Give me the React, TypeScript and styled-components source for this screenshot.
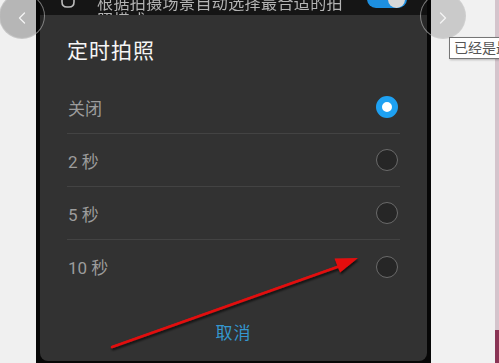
import styled, { createGlobalStyle } from 'styled-components';
import { ChevronLeft, ChevronRight } from 'lucide-react';

const options = [
  { label: '关闭', checked: true },
  { label: '2 秒', checked: false },
  { label: '5 秒', checked: false },
  { label: '10 秒', checked: false },
];

export default function App() {
  return (
    <>
      <GlobalStyle />
      <S.Page>
        <S.Gutter />
        <S.Phone>
          <S.BackdropBar>
            <S.BackdropRow>
              <S.SceneIcon viewBox="0 0 16 20" width={16} height={20}>
                <path
                  d="M2 2 V12 Q2 17 7 17 H9 Q14 17 14 12 V6 L11 9"
                  fill="none"
                  stroke="#bdbdbd"
                  strokeWidth={1.6}
                />
              </S.SceneIcon>
              <S.BackdropText>
                根据拍摄场景自动选择最合适的拍
                <br />
                照模式
              </S.BackdropText>
              <S.Toggle>
                <S.Thumb />
              </S.Toggle>
            </S.BackdropRow>
          </S.BackdropBar>

          <S.Dialog>
            <S.Title>定时拍照</S.Title>
            <S.OptionList>
              {options.map((option, index) => (
                <S.OptionRow key={option.label} last={index === options.length - 1}>
                  <S.OptionLabel>{option.label}</S.OptionLabel>
                  <S.Radio checked={option.checked} />
                </S.OptionRow>
              ))}
            </S.OptionList>
            <S.Footer>
              <S.CancelButton>取消</S.CancelButton>
            </S.Footer>
          </S.Dialog>
        </S.Phone>
        <S.RightArea />
        <S.EdgeStrip>
          <S.EdgeTop />
          <S.EdgeBottom />
        </S.EdgeStrip>

        <S.NavCircle side="left" tone="rgba(0, 0, 0, 0.24)">
          <ChevronLeft size={20} strokeWidth={1.6} color="#f4f4f4" />
        </S.NavCircle>
        <S.NavCircle side="right" tone="rgba(0, 0, 0, 0.16)">
          <ChevronRight size={20} strokeWidth={1.6} color="#f4f4f4" />
        </S.NavCircle>
        <S.Tooltip>已经是最后一张了</S.Tooltip>

        <S.Arrow viewBox="0 0 499 363" width={499} height={363}>
          <defs>
            <filter id="shade" x="-10%" y="-10%" width="120%" height="130%">
              <feDropShadow dx="1" dy="2" stdDeviation="1.2" floodColor="#000" floodOpacity="0.7" />
            </filter>
          </defs>
          <g filter="url(#shade)">
            <line x1={112} y1={347} x2={340} y2={266} stroke="#e31010" strokeWidth={2.6} strokeLinecap="round" />
            <polygon points="358,258 340,272.5 334.5,258.5" fill="#e31010" />
          </g>
        </S.Arrow>
      </S.Page>
    </>
  );
}

const GlobalStyle = createGlobalStyle`
  html, body {
    margin: 0;
    padding: 0;
    background: #f0f0f0;
    overflow: hidden;
  }
  #root {
    width: 499px;
    height: 363px;
  }
`;

const S = {
  Page: styled.div`
    position: relative;
    display: flex;
    width: 499px;
    height: 363px;
    overflow: hidden;
    background: #f0f0f0;
    font-family: Roboto, 'Noto Sans CJK SC', sans-serif;
  `,
  Gutter: styled.div`
    width: 36px;
    flex-shrink: 0;
    background: #f0f0f0;
  `,
  Phone: styled.div`
    width: 395px;
    flex-shrink: 0;
    box-sizing: border-box;
    padding: 0 4px;
    background: #070707;
    display: flex;
    flex-direction: column;
  `,
  BackdropBar: styled.div`
    height: 15px;
    overflow: hidden;
    background: #151515;
    flex-shrink: 0;
  `,
  BackdropRow: styled.div`
    display: flex;
    align-items: flex-start;
    margin-top: -10px;
    padding-left: 20px;
  `,
  SceneIcon: styled.svg`
    flex-shrink: 0;
    filter: blur(0.4px);
  `,
  BackdropText: styled.div`
    margin: 5px 0 0 21px;
    width: 250px;
    font-size: 16px;
    line-height: 17px;
    letter-spacing: 0.4px;
    color: #b4b4b4;
    white-space: nowrap;
    filter: blur(0.5px);
  `,
  Toggle: styled.div`
    margin-left: 20px;
    width: 40px;
    height: 18px;
    border-radius: 9px;
    background: #1d8fe0;
    display: flex;
    justify-content: flex-end;
    align-items: center;
    padding-right: 2px;
    box-sizing: border-box;
  `,
  Thumb: styled.div`
    width: 17px;
    height: 17px;
    border-radius: 50%;
    background: #d8d8d8;
  `,
  Dialog: styled.div`
    height: 346px;
    flex-shrink: 0;
    background: #323232;
    border-radius: 0 0 8px 8px;
    display: flex;
    flex-direction: column;
  `,
  Title: styled.div`
    padding: 22px 0 0 27px;
    height: 44px;
    line-height: 28px;
    font-size: 21px;
    color: #f6f6f6;
    letter-spacing: 1px;
  `,
  OptionList: styled.div`
    display: flex;
    flex-direction: column;
    margin: 0 27px;
  `,
  OptionRow: styled.div<{ last: boolean }>`
    height: 53px;
    box-sizing: border-box;
    display: flex;
    align-items: center;
    justify-content: space-between;
    padding: 0 2px 0 1px;
    border-bottom: ${({ last }) => (last ? 'none' : '1px solid #434343')};
  `,
  OptionLabel: styled.div`
    font-size: 17px;
    color: #9c9c9c;
  `,
  Radio: styled.div<{ checked: boolean }>`
    width: 22px;
    height: 22px;
    box-sizing: border-box;
    border-radius: 50%;
    background: ${({ checked }) => (checked ? '#ffffff' : '#262626')};
    border: ${({ checked }) => (checked ? '6px solid #1ea1f2' : '1.5px solid #6a6a6a')};
  `,
  Footer: styled.div`
    display: flex;
    justify-content: center;
    padding-top: 28px;
  `,
  CancelButton: styled.div`
    font-size: 17px;
    line-height: 24px;
    color: #3597cf;
    letter-spacing: 1px;
  `,
  RightArea: styled.div`
    flex: 1;
    background: #f1f1f1;
  `,
  EdgeStrip: styled.div`
    width: 4px;
    flex-shrink: 0;
    display: flex;
    flex-direction: column;
  `,
  EdgeTop: styled.div`
    flex: 1;
    background: #d4c4cc;
  `,
  EdgeBottom: styled.div`
    height: 33px;
    background: #8a3455;
  `,
  NavCircle: styled.div<{ side: 'left' | 'right'; tone: string }>`
    position: absolute;
    top: -7px;
    ${({ side }) => (side === 'left' ? 'left: -1px;' : 'left: 420px;')}
    width: 46px;
    height: 46px;
    box-sizing: border-box;
    border-radius: 50%;
    background: ${({ tone }) => tone};
    border: 1.5px solid rgba(210, 210, 210, 0.55);
    display: flex;
    align-items: center;
    justify-content: center;
    padding-top: 4px;
  `,
  Tooltip: styled.div`
    position: absolute;
    top: 37px;
    left: 449px;
    height: 22px;
    box-sizing: border-box;
    padding: 0 4px;
    border: 1px solid #767676;
    background: #ffffff;
    box-shadow: 1px 1px 2px rgba(0, 0, 0, 0.25);
    font-size: 14px;
    line-height: 20px;
    color: #555555;
    white-space: nowrap;
  `,
  Arrow: styled.svg`
    position: absolute;
    left: 0;
    top: 0;
    pointer-events: none;
  `,
};
